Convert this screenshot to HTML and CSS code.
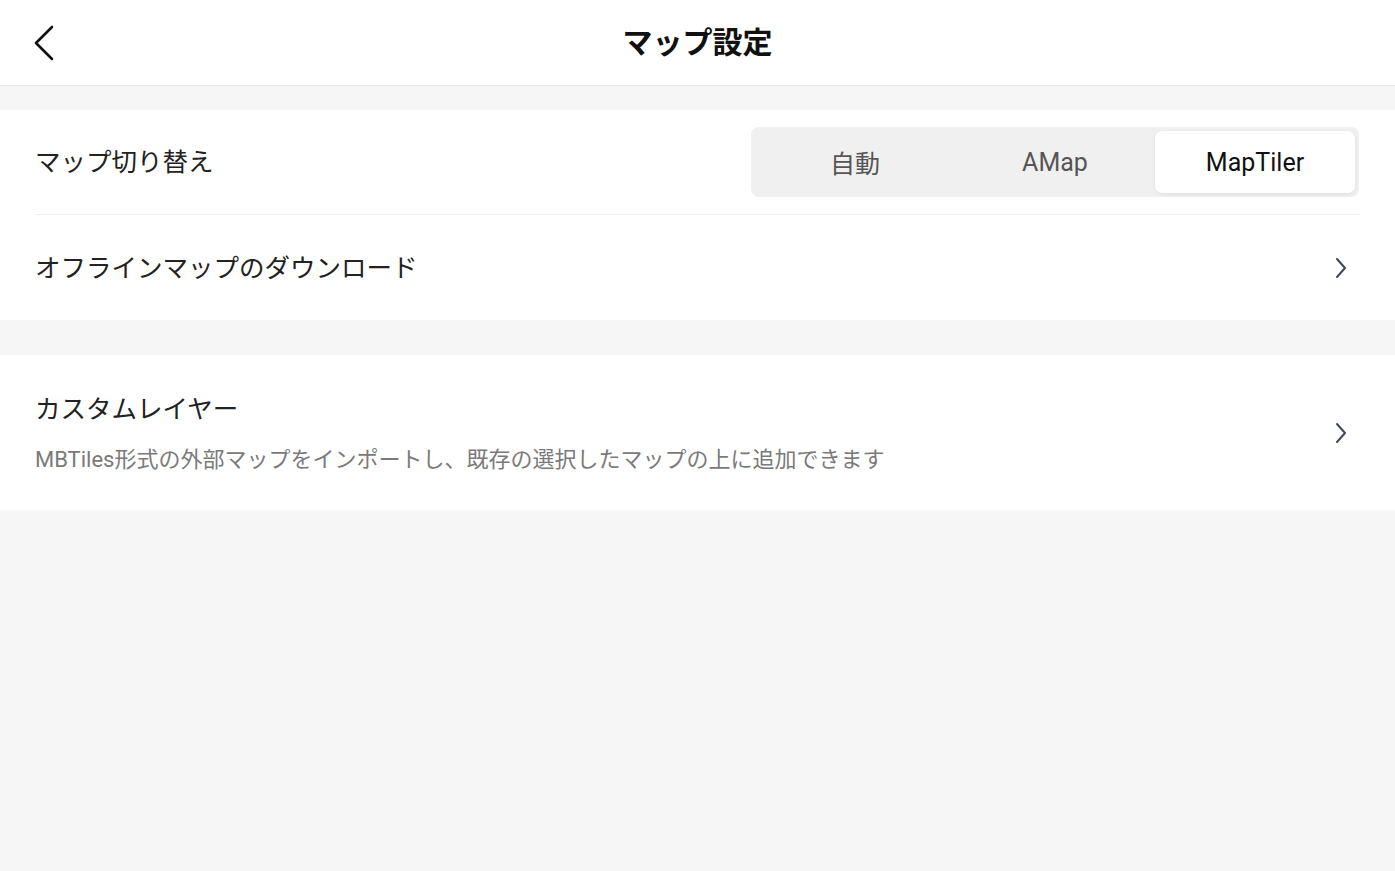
FILE: index.html
```html
<!DOCTYPE html>
<html lang="ja">
<head>
    <meta charset="UTF-8">
    <meta name="viewport" content="width=device-width, initial-scale=1.0">
    <title>マップ設定</title>
    <link rel="stylesheet" href="styles.css">
</head>
<body>
    <header class="top-bar">
        <button class="back-button" aria-label="戻る">
            <svg width="24" height="36" viewBox="0 0 24 36">
                <path d="M20 2 L4 18 L20 34" fill="none" stroke="#111" stroke-width="2.6" stroke-linecap="round" stroke-linejoin="round"/>
            </svg>
        </button>
        <h1 class="page-title">マップ設定</h1>
    </header>

    <section class="settings-group first-group">
        <div class="settings-row divided">
            <span class="row-label">マップ切り替え</span>
            <div class="segmented">
                <span class="segment">自動</span>
                <span class="segment">AMap</span>
                <span class="segment active">MapTiler</span>
            </div>
        </div>
        <div class="settings-row">
            <span class="row-label">オフラインマップのダウンロード</span>
            <svg class="chevron" width="14" height="22" viewBox="0 0 14 22">
                <path d="M3 2 L11 11 L3 20" fill="none" stroke="#3e4759" stroke-width="2" stroke-linecap="round" stroke-linejoin="round"/>
            </svg>
        </div>
    </section>

    <section class="settings-group">
        <div class="settings-row tall">
            <div class="row-text">
                <span class="row-label">カスタムレイヤー</span>
                <span class="row-sub">MBTiles形式の外部マップをインポートし、既存の選択したマップの上に追加できます</span>
            </div>
            <svg class="chevron" width="14" height="22" viewBox="0 0 14 22">
                <path d="M3 2 L11 11 L3 20" fill="none" stroke="#3e4759" stroke-width="2" stroke-linecap="round" stroke-linejoin="round"/>
            </svg>
        </div>
    </section>
</body>
</html>
```

FILE: styles.css
```css
body {
    margin: 0;
    height: 100vh;
    background-color: #f6f6f6;
    font-family: Roboto, "Noto Sans CJK JP", sans-serif;
    color: #222;
}

.top-bar {
    height: 85px;
    background: white;
    border-bottom: 1px solid #e6e6e6;
    display: flex;
    align-items: center;
    justify-content: center;
    position: relative;
}

.back-button {
    position: absolute;
    left: 32px;
    top: 25px;
    padding: 0;
    border: none;
    background: none;
    display: flex;
}

.page-title {
    margin: 0;
    font-size: 30px;
    font-weight: 700;
    color: #111;
    line-height: 40px;
}

.settings-group {
    background: white;
    padding: 0 35px;
    margin-top: 35px;
}

.first-group {
    margin-top: 24px;
}

.settings-row {
    height: 105px;
    display: flex;
    align-items: center;
    justify-content: space-between;
}

.settings-row.divided {
    height: 104px;
    border-bottom: 1px solid #efefef;
}

.settings-row.tall {
    height: auto;
    padding: 36px 0 35px;
}

.row-label {
    font-size: 25.5px;
    line-height: 36px;
    color: #222;
}

.row-text {
    display: flex;
    flex-direction: column;
}

.row-sub {
    margin-top: 18px;
    font-size: 22px;
    line-height: 30px;
    color: #7a7a7a;
}

.chevron {
    margin-right: 12px;
}

.segmented {
    display: flex;
    background: #f0f0f0;
    border-radius: 8px;
    padding: 4px;
    margin-right: 1px;
}

.segment {
    width: 200px;
    height: 62px;
    display: flex;
    align-items: center;
    justify-content: center;
    font-size: 25px;
    color: #555;
    border-radius: 7px;
}

.segment.active {
    background: white;
    color: #111;
    box-shadow: 0 1px 4px rgba(0, 0, 0, 0.08);
}
```
